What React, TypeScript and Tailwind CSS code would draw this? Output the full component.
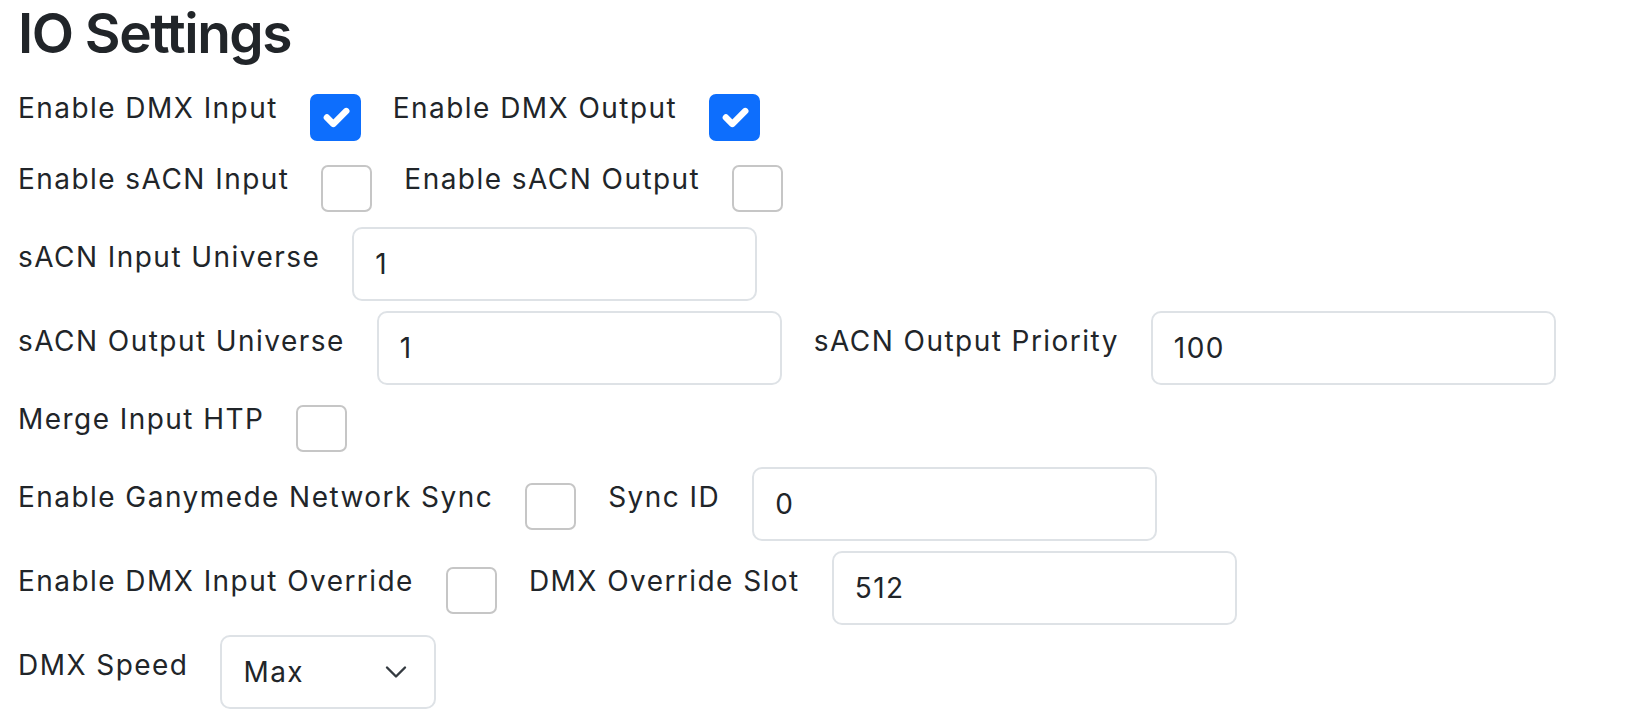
import React from "react";

const Label: React.FC<{ children: React.ReactNode }> = ({ children }) => (
  <label className="mb-[14px] whitespace-nowrap text-[28px] leading-[42px] tracking-[1.45px]">{children}</label>
);

const Check: React.FC<{ checked?: boolean }> = ({ checked }) =>
  checked ? (
    <span className="mt-[4px] flex h-[47px] w-[51px] shrink-0 items-center justify-center rounded-[7px] border-2 border-[#0d6efd] bg-[#0d6efd]">
      <svg viewBox="0 0 20 20" className="h-full w-full" fill="none">
        <path d="m6 10 3 3 6-6" stroke="#fff" strokeWidth="3" strokeLinecap="round" strokeLinejoin="round" />
      </svg>
    </span>
  ) : (
    <span className="mt-[4px] block h-[47px] w-[51px] shrink-0 rounded-[7px] border-2 border-[#c6c6c6] bg-white" />
  );

const TextInput: React.FC<{ value: string }> = ({ value }) => (
  <input
    readOnly
    value={value}
    className="h-[74px] w-[405px] shrink-0 rounded-[10px] border-2 border-[#dee2e6] bg-white px-[21px] text-[28px] tracking-[1.45px] text-[#212529] outline-none"
  />
);

const App: React.FC = () => {
  return (
    <div className="min-h-screen bg-white px-[18px] text-[#212529]" style={{ fontFamily: "Inter, 'Noto Sans', sans-serif" }}>
      <h2 className="mb-[14px] text-[55px] font-semibold leading-[66px] tracking-[-1.5px]">IO Settings</h2>

      {/* Inputs / outputs */}
      <div className="flex h-[70px] items-center gap-8">
        <Label>Enable DMX Input</Label>
        <Check checked />
        <Label>Enable DMX Output</Label>
        <Check checked />
      </div>
      <div className="flex h-[72px] items-center gap-8">
        <Label>Enable sACN Input</Label>
        <Check />
        <Label>Enable sACN Output</Label>
        <Check />
      </div>

      {/* sACN */}
      <div className="flex h-[84px] items-center gap-8">
        <Label>sACN Input Universe</Label>
        <TextInput value="1" />
      </div>
      <div className="flex h-[84px] items-center gap-8">
        <Label>sACN Output Universe</Label>
        <TextInput value="1" />
        <Label>sACN Output Priority</Label>
        <TextInput value="100" />
      </div>
      <div className="flex h-[72px] items-center gap-8">
        <Label>Merge Input HTP</Label>
        <Check />
      </div>

      {/* Sync / override */}
      <div className="flex h-[84px] items-center gap-8">
        <Label>Enable Ganymede Network Sync</Label>
        <Check />
        <Label>Sync ID</Label>
        <TextInput value="0" />
      </div>
      <div className="flex h-[84px] items-center gap-8">
        <Label>Enable DMX Input Override</Label>
        <Check />
        <Label>DMX Override Slot</Label>
        <TextInput value="512" />
      </div>

      <div className="flex h-[84px] items-center gap-8">
        <Label>DMX Speed</Label>
        <div className="relative h-[74px] w-[216px] shrink-0">
          <select className="h-full w-full appearance-none rounded-[10px] border-2 border-[#dee2e6] bg-white pl-[21px] text-[28px] tracking-[1.45px] text-[#212529] outline-none">
            <option>Max</option>
          </select>
          <svg viewBox="0 0 16 16" className="pointer-events-none absolute right-[28px] top-1/2 h-[24px] w-[24px] -translate-y-1/2" fill="none">
            <path d="m2 5 6 6 6-6" stroke="#343a40" strokeWidth="1.6" strokeLinecap="round" strokeLinejoin="round" />
          </svg>
        </div>
      </div>
    </div>
  );
};

export default App;
